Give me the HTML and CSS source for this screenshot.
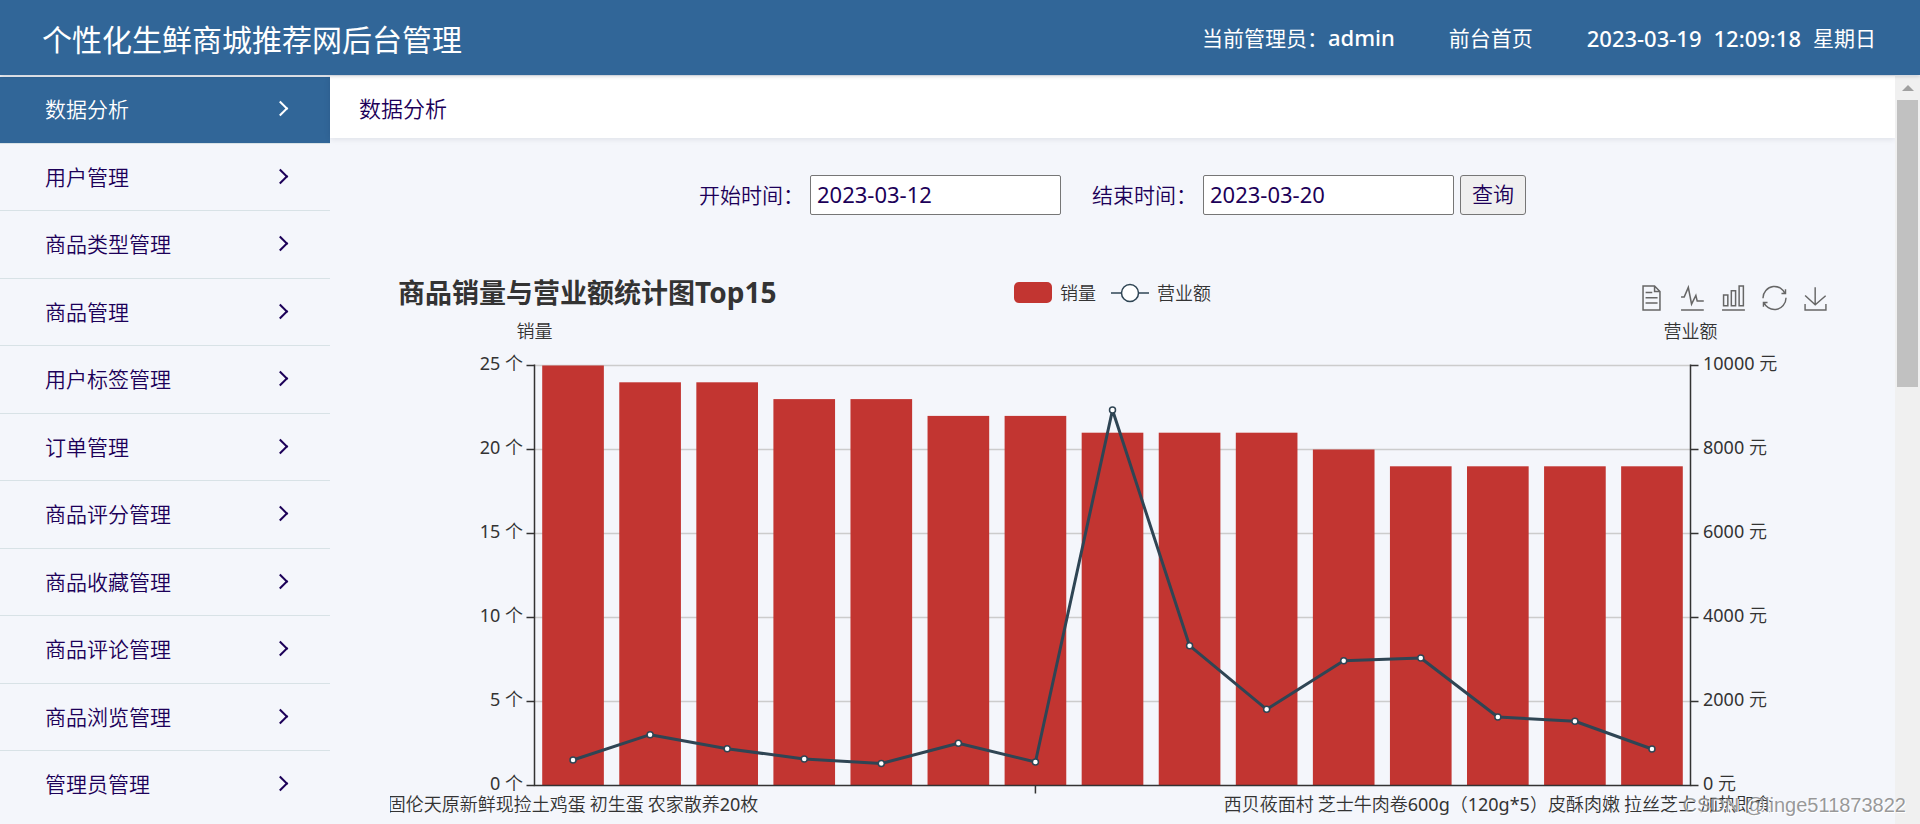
FILE: index.html
```html
<!DOCTYPE html>
<html lang="zh-CN">
<head>
<meta charset="utf-8">
<title>个性化生鲜商城推荐网后台管理</title>
<link rel="stylesheet" href="styles.css">
</head>
<body>
<header class="topbar">
  <h1 class="topbar-title">个性化生鲜商城推荐网后台管理</h1>
  <div class="topbar-info">
    <span>当前管理员：<span class="latin">admin</span></span>
    <a href="#">前台首页</a>
    <span class="clock"><span class="latin">2023-03-19</span><span class="latin">12:09:18</span><span>星期日</span></span>
  </div>
</header>
<div class="layout">
  <nav class="sidebar">
    <ul class="menu" id="menu">
      <li><a class="menu-item active" href="#">数据分析</a></li>
      <li><a class="menu-item" href="#">用户管理</a></li>
      <li><a class="menu-item" href="#">商品类型管理</a></li>
      <li><a class="menu-item" href="#">商品管理</a></li>
      <li><a class="menu-item" href="#">用户标签管理</a></li>
      <li><a class="menu-item" href="#">订单管理</a></li>
      <li><a class="menu-item" href="#">商品评分管理</a></li>
      <li><a class="menu-item" href="#">商品收藏管理</a></li>
      <li><a class="menu-item" href="#">商品评论管理</a></li>
      <li><a class="menu-item" href="#">商品浏览管理</a></li>
      <li><a class="menu-item" href="#">管理员管理</a></li>
    </ul>
  </nav>
  <main class="content">
    <div class="crumb">数据分析</div>
    <form class="query">
      <div class="field">
        <label for="start">开始时间：</label>
        <input id="start" type="text" value="2023-03-12">
      </div>
      <div class="field">
        <label for="end">结束时间：</label>
        <input id="end" type="text" value="2023-03-20">
        <button type="button">查询</button>
      </div>
    </form>
    <section class="chart">
      <div class="chart-head">
        <h2 class="chart-title">商品销量与营业额统计图<span class="chart-title-latin">Top15</span></h2>
        <div class="legend">
          <span class="legend-item"><span class="legend-bar"></span>销量</span>
          <span class="legend-item">
            <svg class="legend-line" viewBox="0 0 38 22"><path d="M0 11H38"/><circle cx="19" cy="11" r="8.5"/></svg>营业额</span>
        </div>
        <div class="tools">
          <button type="button" aria-label="数据视图"><svg viewBox="11.5 2 39.5 56"><path d="M17.5 17.3H33M45.4 29.5h-28M11.5 2v56H51V14.8L38.4 2H11.5zM38.4 2.2v12.7H51M45.4 41.7h-28"/></svg></button>
          <button type="button" aria-label="切换为折线图"><svg viewBox="4 4 52 54"><path d="M4.1 28.9h7.1l9.3-22l7.4 38l9.7-19.7l3 12.8h14.9M4.1 58h51.4"/></svg></button>
          <button type="button" aria-label="切换为柱状图"><svg viewBox="3 2 54 56"><path d="M6.7 22.9h10V48h-10V22.9zM24.9 13h10v35h-10V13zM43.2 2h10v46h-10V2zM3.1 58h53.7"/></svg></button>
          <button type="button" aria-label="还原"><svg viewBox="2 2 56 56"><path d="M47 18.9h9.8V8.7M56.3 20.1C52.1 9 40.5 .6 26.8 2.1C12.6 3.7 1.6 16.2 2.1 30.6M13 41.1H3.1v10.2M3.7 39.9c4.2 11.1 15.8 19.5 29.5 18c14.2-1.6 25.2-14.1 24.7-28.5"/></svg></button>
          <button type="button" aria-label="保存为图片"><svg viewBox="2 0 56 58"><path d="M4.7 22.9L29.3 45.5L54.7 23.4M4.6 43.6V58H55.4V43.6M29.2 45.1V3"/></svg></button>
        </div>
      </div>
      <svg class="plot" id="plot" viewBox="0 45 1445 555" role="img" aria-label="商品销量与营业额统计图"></svg>
    </section>
  </main>
  <div class="scrollbar" aria-hidden="true">
    <svg class="scroll-arrow" viewBox="0 0 12 6"><path d="M6 0L12 6H0z"/></svg>
    <div class="scroll-thumb"></div>
  </div>
</div>
<div class="watermark">CSDN @linge511873822</div>
<script src="chart.js"></script>
</body>
</html>
```
FILE: styles.css
```css
* { box-sizing: border-box; }

body {
  margin: 0;
  height: 100vh;
  overflow: hidden;
  display: flex;
  flex-direction: column;
  background: #f4f6fb;
  color: #1c0058;
  font: 350 21px/1.5 "Noto Sans CJK SC", sans-serif;
}

a { color: inherit; text-decoration: none; }

.latin { font: 500 22px/1 "Noto Sans", sans-serif; }

.topbar {
  flex: none;
  height: 75px;
  padding: 0 44px 0 42px;
  display: flex;
  align-items: center;
  justify-content: space-between;
  background: #316698;
  color: #fff;
  box-shadow: 0 1px 4px rgba(0, 21, 41, .2);
  z-index: 1;
}

.topbar-title { margin: 0; font-size: 30px; font-weight: 400; line-height: 1.4; }

.topbar-info { display: flex; gap: 54px; font-weight: 400; }

.clock { display: flex; align-items: center; gap: 12px; }

.layout {
  flex: 1;
  min-height: 0;
  padding-top: 1px;
  display: flex;
}

.sidebar { flex: none; width: 330px; overflow: hidden; }

.menu { margin: 0; padding: 0; list-style: none; }

.menu-item {
  display: flex;
  align-items: center;
  justify-content: space-between;
  padding: 17px 44px 18px 45px;
  border-bottom: 1px solid #d8e2e6;
}

.menu li:last-child .menu-item { border-bottom-color: transparent; }

.menu-item::after {
  content: "";
  width: 9px;
  height: 9px;
  border: solid currentColor;
  border-width: 2px 2px 0 0;
  transform: rotate(45deg);
}

.menu-item.active {
  background: #316698;
  color: #fff;
  box-shadow: inset 0 1px #eef1f7;
}

.content { flex: 1; min-width: 0; }

.crumb {
  height: 62px;
  padding: 0 29px;
  display: flex;
  align-items: center;
  background: #fff;
  font-size: 22px;
  box-shadow: 0 1px 6px rgba(0, 21, 41, .1);
}

.query {
  padding: 37px 0 0;
  display: flex;
  justify-content: center;
  gap: 31px;
}

.field { display: flex; align-items: center; gap: 6px; }

.field input {
  width: 251px;
  height: 40px;
  padding: 0 6px 2px;
  border: 1px solid #767676;
  border-radius: 2px;
  background: #fff;
  color: inherit;
  font: 400 22px/1 "Noto Sans", sans-serif;
}

.field button {
  width: 66px;
  height: 40px;
  padding: 0 0 2px;
  border: 1px solid #767676;
  border-radius: 3px;
  background: #efefef;
  color: inherit;
  font: inherit;
}

.chart { margin: 60px 60px 0; color: #333; }

.chart-head {
  height: 45px;
  display: grid;
  grid-template-columns: 1fr auto 1fr;
  align-items: center;
  padding: 0 8px 10px;
}

.chart-title {
  margin: 0;
  font: 700 27px/1.2 "Noto Sans CJK SC", sans-serif;
  white-space: nowrap;
}

.chart-title-latin { font: 700 28px/1 "Noto Sans", sans-serif; }

.legend { display: flex; gap: 15px; font-size: 18px; }

.legend-item { display: flex; align-items: center; gap: 8px; }

.legend-bar {
  width: 38px;
  height: 21px;
  border-radius: 5px;
  background: #c23531;
}

.legend-line { width: 38px; height: 22px; fill: #fff; stroke: #2f4554; stroke-width: 1.5; }

.tools { justify-self: end; display: flex; gap: 18px; padding-top: 10px; }

.tools button {
  width: 23px;
  height: 24px;
  padding: 0;
  border: 0;
  background: none;
}

.tools svg {
  display: block;
  width: 100%;
  height: 100%;
  overflow: visible;
  fill: none;
  stroke: #666;
  stroke-width: 3.5;
}

.plot {
  display: block;
  width: 100%;
  font: 400 18px "Noto Sans", "Noto Sans CJK SC", sans-serif;
}

.plot text { fill: #333; }
.plot .name { font-weight: 350; font-family: "Noto Sans CJK SC", sans-serif; }
.plot .unit { font-weight: 350; font-family: "Noto Sans CJK SC", sans-serif; }
.grid-line { stroke: #ccc; stroke-width: 1.5; }
.axis { fill: none; stroke: #333; stroke-width: 1.5; }
.bar { fill: #c23531; }
.trend { fill: none; stroke: #2f4554; stroke-width: 3; stroke-linejoin: bevel; }
.dot { fill: #fff; stroke: #2f4554; stroke-width: 1.5; }

.scrollbar {
  flex: none;
  width: 25px;
  padding: 9px 2px 0;
  background: #f0f0f0;
}

.scroll-arrow { display: block; width: 12px; height: 6px; margin: 0 auto 9px; fill: #a0a0a0; }

.scroll-thumb { height: 287px; background: #c1c1c1; }

.watermark {
  position: absolute;
  right: 14px;
  bottom: 4px;
  color: rgba(120, 120, 120, .75);
  font: 20px/30px "Liberation Sans", sans-serif;
  text-shadow: 1px 1px 0 #fff;
}
```
FILE: chart.js
```js
const sales = [25, 24, 24, 23, 23, 22, 22, 21, 21, 21, 20, 19, 19, 19, 19];
const revenue = [607, 1210, 876, 631, 524, 1005, 560, 8940, 3329, 1814, 2971, 3036, 1631, 1529, 869];
const left = 144.5, right = 1300.5, top0 = 90.5, base = 510.5;
const step = (right - left) / sales.length;
const height = base - top0;
const parts = [];

for (let i = 0; i <= 5; i++) {
  const y = base - height * i / 5;
  if (i) parts.push(`<path class="grid-line" d="M${left} ${y}H${right}"/>`);
}
sales.forEach((v, i) => {
  const h = height * v / 25;
  parts.push(`<rect class="bar" x="${left + step * (i + 0.1)}" y="${base - h}" width="${step * 0.8}" height="${h}"/>`);
});
parts.push(`<path class="axis" d="M${left} ${top0 - 1}V${base}H${right}V${top0 - 1}M${left + step * 6.5} ${base}v8"/>`);
for (let i = 0; i <= 5; i++) {
  const y = base - height * i / 5;
  parts.push(`<path class="axis" d="M${left} ${y}h-8M${right} ${y}h8"/>`);
  parts.push(`<text x="133" y="${y + 4}" text-anchor="end">${i * 5} <tspan class="unit">个</tspan></text>`);
  parts.push(`<text x="1313" y="${y + 4}">${i * 2000} <tspan class="unit">元</tspan></text>`);
}
const points = revenue.map((v, i) => [left + step * (i + 0.5), base - height * v / 10000]);
parts.push(`<polyline class="trend" points="${points.join(' ')}"/>`);
points.forEach(([x, y]) => parts.push(`<circle class="dot" cx="${x}" cy="${y}" r="3"/>`));
parts.push(`<text class="name" x="${left}" y="63" text-anchor="middle">销量</text>`);
parts.push(`<text class="name" x="${right}" y="63" text-anchor="middle">营业额</text>`);
parts.push(`<text x="${points[0][0]}" y="536" text-anchor="middle"><tspan class="unit">固伦天原新鲜现捡土鸡蛋 初生蛋 农家散养</tspan>20<tspan class="unit">枚</tspan></text>`);
parts.push(`<text x="${points[12][0]}" y="536" text-anchor="middle"><tspan class="unit">西贝莜面村 芝士牛肉卷</tspan>600g<tspan class="unit">（</tspan>120g*5<tspan class="unit">）皮酥肉嫩 拉丝芝士 加热即食</tspan></text>`);
document.getElementById('plot').innerHTML = parts.join('');
```
